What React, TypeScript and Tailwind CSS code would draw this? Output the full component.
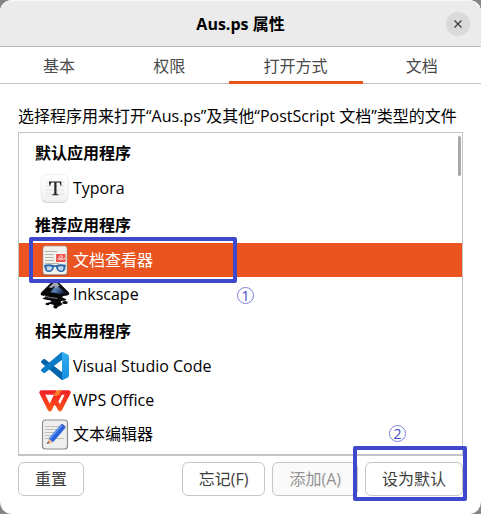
import { useState } from "react";
import type { ReactNode } from "react";

const tabs = ["基本", "权限", "打开方式", "文档"];

function TyporaIcon() {
  return (
    <svg viewBox="0 0 32 32" className="size-8" aria-hidden="true">
      <defs>
        <linearGradient id="paper" x1="0" y1="0" x2="0" y2="1">
          <stop offset="0" stopColor="#ffffff" />
          <stop offset="1" stopColor="#f0f0f0" />
        </linearGradient>
      </defs>
      <rect x="2" y="4" width="27" height="27" rx="6" fill="#cfcfcf" />
      <rect x="2" y="2.5" width="27.5" height="27.5" rx="6.5" fill="url(#paper)" stroke="#e6e6e6" strokeWidth="0.7" />
      <path d="M7 10h18M7 14h18M7 18h18M7 22h18" stroke="#dadada" strokeWidth="0.8" />
      <path d="M10 9.5h12.2l.3 4h-1l-.7-2.2c-.2-.6-.4-.7-1-.7h-2.300v10.600c0 .8.2 1 1 1.100l1.100.1v.9h-6.400v-.9l1.100-.1c.8-.1 1-.3 1-1.100V10.600h-2.300c-.6 0-.8.1-1 .7l-.7 2.200h-1z" fill="#242424" />
    </svg>
  );
}

function ViewerIcon() {
  return (
    <svg viewBox="0 0 32 32" className="size-8" aria-hidden="true">
      <rect x="3.500" y="2.500" width="25" height="29" rx="3" fill="#8b4430" />
      <rect x="4" y="2" width="24" height="28.500" rx="2.500" fill="#f1f1ef" stroke="#b7a49c" strokeWidth="0.700" />
      <path d="M6 7.500h12M6 10.500h9M6 13.500h9M6 16.500h9M6 19.500h14" stroke="#b7b7a8" strokeWidth="1" />
      <rect x="17" y="10" width="9.500" height="8" fill="#f2574f" />
      <path d="M18.500 14.500c2 2 6-.5 4.500-2.500-1.500-1-3.500 1-2 2.500s4 .8 5-.5" fill="none" stroke="#fff" strokeWidth="0.900" />
      <path d="M5 21c3-1.200 7-1.200 10 .3h2c3-1.500 7-1.500 10-.3l-.5 2c-.3 4-2 5-4.500 5s-4.500-1.500-5-5h-2c-.5 3.500-2.500 5-5 5s-4-1-4.500-5z" fill="#2c69a8" />
      <path d="M7.500 22.700c2-.7 4-.5 5.700.4-.2 2.500-1.400 3.500-3.200 3.500s-2.500-1-2.500-3.900zM18.800 23.100c1.700-.9 3.700-1.100 5.700-.4 0 2.900-.7 3.900-2.500 3.900s-3-1-3.200-3.500z" fill="#c3d9ea" />
    </svg>
  );
}

function InkscapeIcon() {
  return (
    <svg viewBox="0 0 32 32" className="size-8" aria-hidden="true">
      <defs>
        <linearGradient id="ink" x1="0" y1="0" x2="1" y2="0.4">
          <stop offset="0" stopColor="#101218" />
          <stop offset="0.450" stopColor="#5c85c0" />
          <stop offset="1" stopColor="#101c38" />
        </linearGradient>
      </defs>
      <path d="M14 2.800q2-2 4 0L29.500 14c1.500 1.600.8 3-1.500 3.400-2.500.4-4.800.6-4.800 1.600 0 1.400 5 1.300 4 3-.8 1.200-5 .3-5.500 1.700-.3 1 2.200 1.400 1.500 2.700-.8 1.300-4.200 1.600-4.800 3-.5 1.300-2.600 1.600-3.700.4-1.200-1.300 1.300-2.200-.5-3-1.700-.8-5 0-5.200-1.500-.1-1.300 3.500-.7 3.300-2-.2-1.200-6.300-.8-8.800-2.700-.8-.7 3.600-1.200 3-2.200-.5-.8-4-.2-4.700-1.900-.4-1 .2-1.900.9-2.600z" fill="#08080a" />
      <path d="M17 6.500l10.500 9q-5 1.300-9 0-5-1.500-7.500-1z" fill="url(#ink)" />
      <path d="M15.800 3.600q.6-.4 1.200.2l3.700 3.700-2 1-2 1.500-1.500-2-2.500 2-3-.5z" fill="#a3a7ad" />
      <path d="M5 17.500c4 2.500 9 2 13.500 3" fill="none" stroke="#8c9096" strokeWidth="0.900" />
      <ellipse cx="26" cy="24.500" rx="2.800" ry="1.500" fill="#08080a" />
      <ellipse cx="8.500" cy="26" rx="2" ry="1.200" fill="#08080a" />
    </svg>
  );
}

function CodeIcon() {
  return (
    <svg viewBox="0 0 32 32" className="size-8" aria-hidden="true">
      <defs>
        <linearGradient id="fold" x1="0" y1="0" x2="0" y2="1">
          <stop offset="0" stopColor="#35aef2" />
          <stop offset="1" stopColor="#168fdf" />
        </linearGradient>
      </defs>
      <path d="M2.300 11l2-1.800q.8-.7 1.700 0L23.500 22.500V30q-1.200-.1-2-.9L2.300 12.700q-.7-.9 0-1.700z" fill="#0065a9" />
      <path d="M2.300 21l2 1.800q.8.700 1.700 0L23.500 9.500V2q-1.200.1-2 .9L2.300 19.300q-.7.900 0 1.700z" fill="#087bc4" />
      <path d="M21.500 29.100c.9.900 1.500.4 1.500.4V2.500s-.6-.5-1.500.4q.9-1.100 2.300-.8l5 2.400q1.200.6 1.200 1.900v19.200q0 1.300-1.200 1.900l-5 2.400q-1.400.3-2.300-.8z" fill="url(#fold)" />
    </svg>
  );
}

function WpsIcon() {
  return (
    <svg viewBox="0 0 32 32" className="size-8" aria-hidden="true">
      <defs>
        <linearGradient id="wps" gradientUnits="userSpaceOnUse" x1="0" y1="6" x2="0" y2="27">
          <stop offset="0" stopColor="#f01f27" />
          <stop offset="1" stopColor="#ff5318" />
        </linearGradient>
      </defs>
      <g fill="none" stroke="url(#wps)" strokeWidth="4.600" strokeLinejoin="round">
        <path d="M17 8.500H2.600l8.200 16.500L18.500 8.500" />
        <path d="M16 16l5 9 8.400-16.500H21.500L15 21" />
      </g>
      <path d="M17.500 6.200h5l-2.200 4.600-4.300 1.700-1.200-1.700z" fill="#ff7a2c" />
    </svg>
  );
}

function EditorIcon() {
  return (
    <svg viewBox="0 0 32 32" className="size-8" aria-hidden="true">
      <rect x="3.500" y="2" width="25" height="29" rx="3" fill="#eeeeee" stroke="#8c8c8c" strokeWidth="1.200" />
      <path d="M6 8.500h15M6 11.500h12M6 14.500h10M6 17.500h8M6 20.500h19" stroke="#b9b9ae" strokeWidth="0.900" />
      <path d="M8 26l1.800-5.500 4.200 3.700z" fill="#e8b58c" />
      <path d="M8 26l.8-2.300 1.500 1.400z" fill="#333" />
      <path d="M9.800 20.500L22 6.500l4.300 3.600L14 24.200z" fill="#2c62d8" />
      <path d="M9.800 20.500L22 6.500l1.500 1.200-12.300 14z" fill="#5d92f2" />
      <path d="M22 6.500q.8-.8 1.700-.2l2.400 2q.8.800.2 1.800z" fill="#1c46ab" />
    </svg>
  );
}

const groups: { title: string; apps: { name: string; icon: ReactNode }[] }[] = [
  { title: "默认应用程序", apps: [{ name: "Typora", icon: <TyporaIcon /> }] },
  {
    title: "推荐应用程序",
    apps: [
      { name: "文档查看器", icon: <ViewerIcon /> },
      { name: "Inkscape", icon: <InkscapeIcon /> },
    ],
  },
  {
    title: "相关应用程序",
    apps: [
      { name: "Visual Studio Code", icon: <CodeIcon /> },
      { name: "WPS Office", icon: <WpsIcon /> },
      { name: "文本编辑器", icon: <EditorIcon /> },
    ],
  },
];

const buttonStyle =
  "h-[34px] rounded-md border border-[#c6c6c6] bg-white px-4 text-[#3d3d3d] disabled:bg-[#fafafa] disabled:text-[#929292]";

const markStyle =
  "absolute flex size-[17px] items-center justify-center rounded-full border border-[#7b81dc] text-sm text-[#3f48cc]";

export default function App() {
  const [tab, setTab] = useState("打开方式");
  const [selected, setSelected] = useState("文档查看器");

  return (
    <div className="min-h-screen bg-[#858585] font-['Open_Sans','Noto_Sans_CJK_SC',sans-serif] text-base text-black">
      <main className="flex min-h-screen flex-col rounded-xl bg-white">
        <header className="grid h-[47px] grid-cols-[1fr_auto_1fr] items-center rounded-t-xl border-t border-b border-t-[#f7f7f7] border-b-[#b9b9b9] bg-[#ebebeb] px-[11px]">
          <h1 className="col-start-2 font-bold">Aus.ps 属性</h1>
          <button
            aria-label="关闭"
            className="flex size-6 items-center justify-center justify-self-end rounded-full bg-[#dadada]"
          >
            <svg viewBox="0 0 8 8" className="size-2" aria-hidden="true">
              <path d="M.5.5l7 7M7.500.5l-7 7" stroke="#3d3d3d" strokeWidth="1.300" />
            </svg>
          </button>
        </header>

        <nav className="flex h-[37px] gap-2 border-b border-[#c4c4c4] px-2" role="tablist">
          {tabs.map((name) => (
            <button
              key={name}
              role="tab"
              aria-selected={tab === name}
              onClick={() => setTab(name)}
              className="-mb-px flex-auto border-b-3 border-transparent pt-1 text-[#4a4a4a] aria-selected:border-[#e95420]"
            >
              {name}
            </button>
          ))}
        </nav>

        <section className="flex flex-1 flex-col px-[18px] pt-5 pb-[18px]">
          <p className="mb-1 leading-6 whitespace-nowrap">
            选择程序用来打开“Aus.ps”及其他“PostScript 文档”类型的文件
          </p>

          <div className="relative flex-1 border border-[#c4c4c4] border-b-2 pb-0.5">
            {groups.map((group) => (
              <div key={group.title}>
                <h2 className="flex h-[38px] items-center px-4 pt-0.5 font-bold">{group.title}</h2>
                <ul>
                  {group.apps.map((app) => (
                    <li key={app.name} className="relative">
                      <button
                        aria-pressed={selected === app.name}
                        onClick={() => setSelected(app.name)}
                        className="flex h-[34px] w-full items-center gap-0.5 px-5 aria-pressed:bg-[#e95420] aria-pressed:text-white"
                      >
                        {app.icon}
                        {app.name}
                      </button>
                      {app.name === "文档查看器" && (
                        <div className="pointer-events-none absolute -top-1.5 left-2.5 z-10 h-[46px] w-52 rounded-xs border-4 border-[#3f48cc]">
                          <span className={`${markStyle} top-full left-full mt-2 ml-1`}>1</span>
                        </div>
                      )}
                    </li>
                  ))}
                </ul>
              </div>
            ))}
            <div className="absolute top-[3px] right-px h-10 w-[3px] rounded-full bg-[#a9a9a9]" />
          </div>

          <footer className="mt-1.5 flex gap-[7px]">
            <button className={buttonStyle}>重置</button>
            <span className="flex-1" />
            <button className={buttonStyle}>忘记(F)</button>
            <button className={buttonStyle} disabled>
              添加(A)
            </button>
            <div className="relative">
              <button className={buttonStyle}>设为默认</button>
              <div className="pointer-events-none absolute -top-4 -right-1 -bottom-[5px] -left-3 rounded-xs border-4 border-[#3f48cc]">
                <span className={`${markStyle} bottom-full left-8 mb-2`}>2</span>
              </div>
            </div>
          </footer>
        </section>
      </main>
    </div>
  );
}
